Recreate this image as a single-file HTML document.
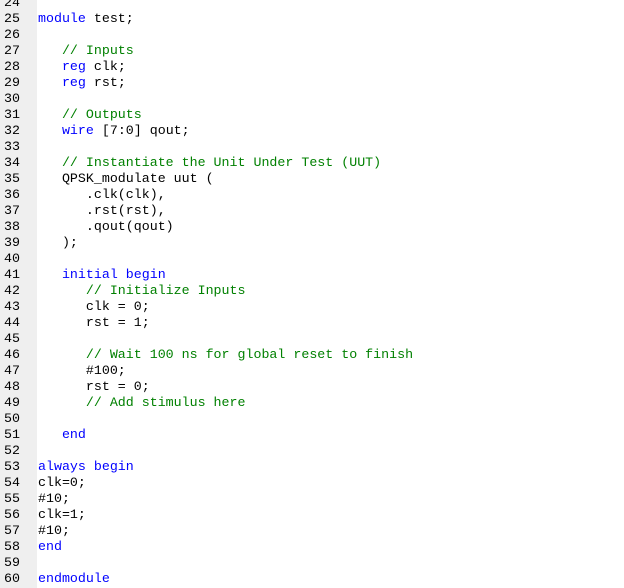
<!DOCTYPE html>
<html><head><style>
html,body{margin:0;padding:0;width:624px;height:588px;overflow:hidden;background:#fff}
.g{position:absolute;left:0;top:0;width:37px;height:588px;background:#efefef}
.c{position:absolute;top:-5px;left:0;font-family:"Liberation Mono","Courier New",monospace;font-size:13.3px;line-height:16px;white-space:pre;color:#000}
.n{display:inline-block;width:38px;padding-left:4px;box-sizing:border-box}
.k{color:#0000ff}.m{color:#008000}
</style></head><body>
<div class="g"></div>
<div class="c"><span class="n">24</span>
<span class="n">25</span><span class="k">module</span> test;
<span class="n">26</span>
<span class="n">27</span>   <span class="m">// Inputs</span>
<span class="n">28</span>   <span class="k">reg</span> clk;
<span class="n">29</span>   <span class="k">reg</span> rst;
<span class="n">30</span>
<span class="n">31</span>   <span class="m">// Outputs</span>
<span class="n">32</span>   <span class="k">wire</span> [7:0] qout;
<span class="n">33</span>
<span class="n">34</span>   <span class="m">// Instantiate the Unit Under Test (UUT)</span>
<span class="n">35</span>   QPSK_modulate uut (
<span class="n">36</span>      .clk(clk),
<span class="n">37</span>      .rst(rst),
<span class="n">38</span>      .qout(qout)
<span class="n">39</span>   );
<span class="n">40</span>
<span class="n">41</span>   <span class="k">initial begin</span>
<span class="n">42</span>      <span class="m">// Initialize Inputs</span>
<span class="n">43</span>      clk = 0;
<span class="n">44</span>      rst = 1;
<span class="n">45</span>
<span class="n">46</span>      <span class="m">// Wait 100 ns for global reset to finish</span>
<span class="n">47</span>      #100;
<span class="n">48</span>      rst = 0;
<span class="n">49</span>      <span class="m">// Add stimulus here</span>
<span class="n">50</span>
<span class="n">51</span>   <span class="k">end</span>
<span class="n">52</span>
<span class="n">53</span><span class="k">always begin</span>
<span class="n">54</span>clk=0;
<span class="n">55</span>#10;
<span class="n">56</span>clk=1;
<span class="n">57</span>#10;
<span class="n">58</span><span class="k">end</span>
<span class="n">59</span>
<span class="n">60</span><span class="k">endmodule</span></div>
</body></html>
